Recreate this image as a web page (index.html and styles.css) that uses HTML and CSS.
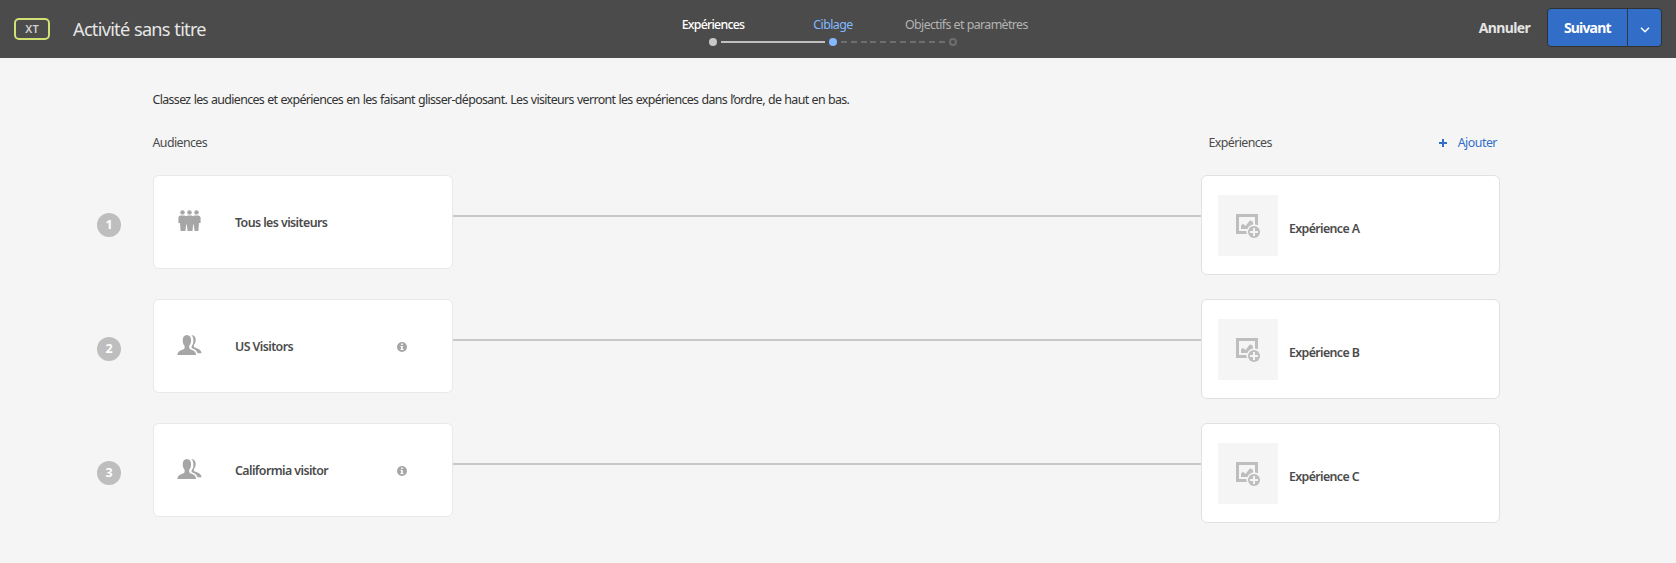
FILE: index.html
```
<!DOCTYPE html>
<html lang="fr">
<head>
<meta charset="utf-8">
<title>Activité sans titre</title>
<link rel="stylesheet" href="styles.css">
</head>
<body>
<svg class="sprite" aria-hidden="true">
  <symbol id="crowd" viewBox="0 0 23 21">
    <circle cx="4.5" cy="2.4" r="2.2"/><circle cx="11.5" cy="2.4" r="2.2"/><circle cx="18.5" cy="2.4" r="2.2"/>
    <path d="M2.500 5.500h4l1.500.8 1.500-.8h4l1.500.8 1.500-.8h4Q22.600 5.500 22.600 8v5H21l-.6 8h-3.800l-.8-6.500h-.6l-.8 6.500H9.600l-.8-6.500h-.6L7.400 21H2.600L2 13H.4V8Q.4 5.500 2.500 5.500z"/>
  </symbol>
  <symbol id="users" viewBox="0 0 25 20">
    <path d="M9.900 0c2.800 0 4.200 2.100 4.200 5.200 0 2.300-.8 4.300-1.900 5.500v2.100c0 .7.4 1.100 1.100 1.400 3.500 1.100 5.700 2.600 5.900 5.800H.4c.2-3.200 2.600-4.700 6.100-5.800.8-.3 1.100-.7 1.100-1.400v-2.100c-1.200-1.200-1.900-3.200-1.900-5.500C5.700 2.100 7.100 0 9.900 0z"/>
    <path d="M14.400.1c3 .1 4.300 2.100 4.300 5 0 2.100-.7 3.700-1.800 4.800v1.500c0 .6.4.9 1 1.200 3.600 1.100 6.200 2.400 6.700 5.600h-4c-.8-2.300-2.400-3.500-5.200-4.600-.5-.2-.8-.5-.8-1v-1.400c1.100-1.300 1.800-3.200 1.800-5.500 0-2.400-.7-4.400-2-5.600z"/>
  </symbol>
  <symbol id="info" viewBox="0 0 10 10">
    <circle cx="5" cy="5" r="5"/><path fill="#fff" d="M4.200 1.500h1.600v1.500H4.200zM3.500 4h2.300v3h.7v1h-3V7h.7V5h-.7z"/>
  </symbol>
  <symbol id="image-add" viewBox="0 0 24 24">
    <path d="M0 0h22v11.200a8 8 0 0 0-3-.8V3H3v14h7.400a8 8 0 0 0 .6 3H0z"/>
    <path d="M5 15V11.500l2-1.800 2.500 2.300L14 6.200 17 8v2.500a8 8 0 0 0-5.600 4.500z"/>
    <circle cx="18" cy="18" r="6"/><path fill="#f5f5f5" d="M17 14h2v3h3v2h-3v3h-2v-3h-3v-2h3z"/>
  </symbol>
</svg>

<header class="topbar">
  <span class="type-badge">XT</span>
  <h1 class="title">Activité sans titre</h1>
  <nav class="steps">
    <div class="step step-done"><span class="step-label">Expériences</span><i class="dot"></i></div>
    <div class="step step-current"><span class="step-label">Ciblage</span><i class="dot"></i></div>
    <div class="step step-next"><span class="step-label">Objectifs et paramètres</span><i class="dot"></i></div>
  </nav>
  <div class="actions">
    <span class="cancel">Annuler</span>
    <div class="split-button">
      <span class="next">Suivant</span>
      <span class="toggle"><svg width="10" height="6" viewBox="0 0 10 6"><path d="M1 .8l4 4 4-4"/></svg></span>
    </div>
  </div>
</header>

<main class="content">
  <p class="intro">Classez les audiences et expériences en les faisant glisser-déposant. Les visiteurs verront les expériences dans l’ordre, de haut en bas.</p>
  <div class="headings">
    <span>Audiences</span>
    <span>Expériences</span>
    <span class="add"><svg width="8" height="8" viewBox="0 0 8 8"><path d="M3 0h2v3h3v2H5v3H3V5H0V3h3z"/></svg><span>Ajouter</span></span>
  </div>

  <section class="rows">
    <div class="row">
      <span class="rank">1</span>
      <div class="card audience"><svg class="icon crowd"><use href="#crowd"/></svg><span class="name">Tous les visiteurs</span></div>
      <div class="link"></div>
      <div class="card experience"><div class="thumb"><svg><use href="#image-add"/></svg></div><span class="exp-name">Expérience A</span></div>
    </div>
    <div class="row">
      <span class="rank">2</span>
      <div class="card audience"><svg class="icon"><use href="#users"/></svg><span class="name">US Visitors</span><svg class="info"><use href="#info"/></svg></div>
      <div class="link"></div>
      <div class="card experience"><div class="thumb"><svg><use href="#image-add"/></svg></div><span class="exp-name">Expérience B</span></div>
    </div>
    <div class="row">
      <span class="rank">3</span>
      <div class="card audience"><svg class="icon"><use href="#users"/></svg><span class="name">Califormia visitor</span><svg class="info"><use href="#info"/></svg></div>
      <div class="link"></div>
      <div class="card experience"><div class="thumb"><svg><use href="#image-add"/></svg></div><span class="exp-name">Expérience C</span></div>
    </div>
  </section>
</main>
</body>
</html>
```
FILE: styles.css
```
* { box-sizing: border-box; }
body {
  margin: 0;
  height: 563px;
  overflow: hidden;
  background: #f5f5f5;
  color: #4b4b4b;
  font: 12.4px/18px "Noto Sans", "Open Sans", sans-serif;
  white-space: nowrap;
}
svg { display: block; flex: none; }
.sprite { display: none; }

.topbar {
  display: grid;
  grid-template-columns: 36px 603px 360px 1fr;
  height: 58px;
  padding: 0 14px;
  background: #4b4b4b;
}
.type-badge {
  height: 22px;
  margin-top: 18px;
  border: 2px solid #d2df72;
  border-radius: 5px;
  color: #d0d0d0;
  font-size: 11px;
  font-weight: 600;
  line-height: 18px;
  text-align: center;
}
.title {
  margin: 17px 0 0 23px;
  color: #e6e6e6;
  font-size: 18.2px;
  font-weight: 400;
  line-height: 25px;
  letter-spacing: -0.74px;
  word-spacing: 0.5px;
}
.steps { display: grid; grid-template-columns: repeat(3, 120px); padding-top: 16px; }
.step {
  display: grid;
  grid-template-columns: 100%;
  grid-template-rows: 22px 8px;
  justify-items: center;
  align-content: start;
}
.step-label { letter-spacing: -0.55px; }
.dot { width: 8px; height: 8px; border-radius: 50%; position: relative; background: #c8c8c8; }
.step-done { color: #fff; font-weight: 500; }
.step-done .step-label { letter-spacing: -0.78px; }
.step-current { color: #82b9ff; }
.step-current .dot { background: #82b9ff; }
.step-next { color: #b3b3b3; }
.step-next .step-label { justify-self: start; margin-left: 12px; letter-spacing: -0.62px; word-spacing: 0.3px; }
.step-next .dot { background: none; border: 2px solid #6e6e6e; }
.step-done .dot::after,
.step-current .dot::after {
  content: "";
  position: absolute;
  left: 12px;
  top: 3px;
  width: 104px;
  height: 2px;
}
.step-done .dot::after { background: #c0c0c0; }
.step-current .dot::after { background: repeating-linear-gradient(90deg, #6e6e6e 0 6px, transparent 6px 9.8px); }

.actions { display: flex; justify-content: flex-end; padding-top: 8px; }
.cancel {
  margin: 11px 17px 0 0;
  color: #e4e4e4;
  font-size: 14px;
  font-weight: 700;
  letter-spacing: -0.65px;
}
.split-button {
  display: grid;
  grid-template-columns: 80px 33px;
  width: 115px;
  height: 39px;
  border: 1px solid #303030;
  border-radius: 4px;
  background: #326ec8;
  color: #fff;
}
.next {
  border-right: 1px solid #303844;
  font-size: 14px;
  font-weight: 700;
  line-height: 38px;
  letter-spacing: -0.85px;
  padding-left: 16px;
}
.toggle { display: grid; place-items: center; padding-top: 4px; }
.toggle path { fill: none; stroke: #fff; stroke-width: 1.5; }

.content { padding: 33px 176px 0 97px; }
.intro { margin: 0 0 0 55.500px; color: #323232; letter-spacing: -0.64px; word-spacing: 0.5px; }
.headings {
  display: grid;
  grid-template-columns: 1056px 1fr auto;
  margin: 25px 3px 0 55.500px;
  letter-spacing: -0.6px;
}
.add { display: flex; align-items: center; gap: 11px; color: #326ec8; fill: #326ec8; letter-spacing: -0.5px; }

.rows { display: grid; gap: 24px; margin-top: 23px; }
.row {
  display: grid;
  grid-template-columns: 24px 32px 300px 1fr 299px;
  height: 100px;
}
.rank {
  width: 24px;
  height: 24px;
  margin-top: 38px;
  border-radius: 50%;
  background: #bebebe;
  color: #fff;
  font-size: 12.5px;
  font-weight: 700;
  line-height: 24px;
  text-align: center;
}
.card { display: flex; background: #fff; border: 1px solid #e9e9e9; border-radius: 6px; }
.audience {
  grid-column: 3;
  height: 94px;
  padding: 38px 45px 0 23px;
  font-weight: 600;
}
.icon { width: 25px; height: 20px; margin-top: -3px; fill: #a6a6a6; }
.crowd { width: 23px; height: 21px; margin: -4px 1px 0; }
.name { margin: 0 auto 0 33px; letter-spacing: -0.58px; }
.info { width: 10px; height: 10px; margin-top: 4px; fill: #a6a6a6; }
.link { height: 2px; margin-top: 40px; background: #c8c8c8; }
.experience { height: 100px; padding: 19px 0 0 16px; border-color: #e1e1e1; font-weight: 600; }
.thumb { width: 60px; height: 61px; padding: 19px 0 0 18px; background: #f5f5f5; }
.thumb svg { width: 24px; height: 24px; fill: #bebebe; }
.exp-name { margin: 25px 0 0 11px; letter-spacing: -0.63px; }
```
